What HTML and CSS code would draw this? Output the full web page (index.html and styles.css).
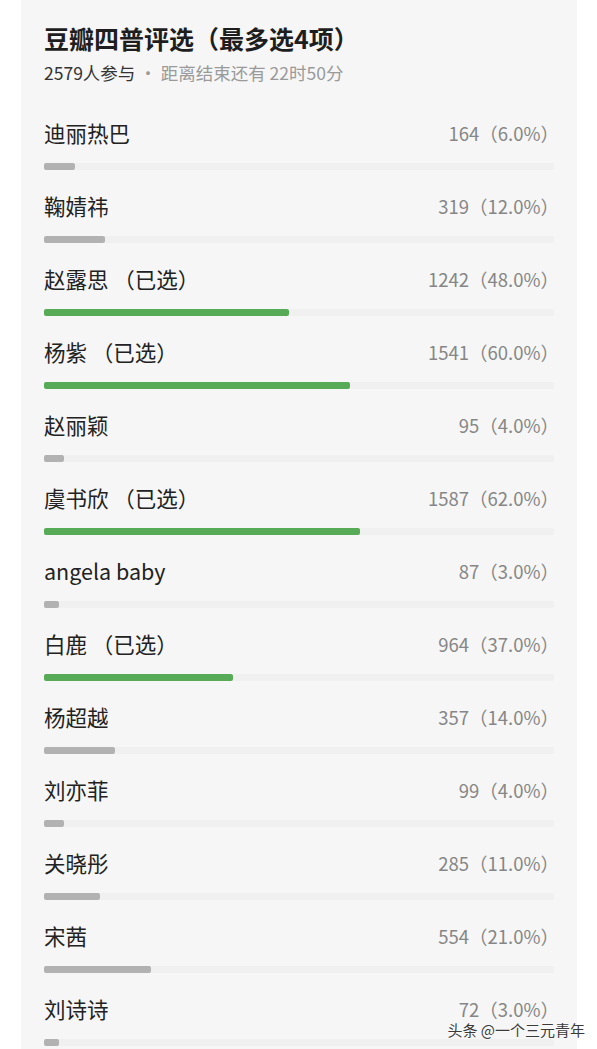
FILE: index.html
```html
<!DOCTYPE html>
<html lang="zh-CN">
<head>
  <meta charset="UTF-8">
  <meta name="viewport" content="width=device-width, initial-scale=1.0">
  <title>豆瓣四普评选</title>
  <link rel="stylesheet" href="styles.css">
</head>
<body>

  <div class="poll-card">
    <h2 class="poll-title">豆瓣四普评选（最多选4项）</h2>
    <p class="poll-meta"><span class="count">2579人参与</span> · 距离结束还有 22时50分</p>

    <ul class="poll-list">
      <li class="poll-item">
        <div class="item-head"><span class="name">迪丽热巴</span><span class="value">164（6.0%）</span></div>
        <div class="track"><div class="fill" style="width: 6%"></div></div>
      </li>
      <li class="poll-item">
        <div class="item-head"><span class="name">鞠婧祎</span><span class="value">319（12.0%）</span></div>
        <div class="track"><div class="fill" style="width: 12%"></div></div>
      </li>
      <li class="poll-item selected">
        <div class="item-head"><span class="name">赵露思 （已选）</span><span class="value">1242（48.0%）</span></div>
        <div class="track"><div class="fill" style="width: 48%"></div></div>
      </li>
      <li class="poll-item selected">
        <div class="item-head"><span class="name">杨紫 （已选）</span><span class="value">1541（60.0%）</span></div>
        <div class="track"><div class="fill" style="width: 60%"></div></div>
      </li>
      <li class="poll-item">
        <div class="item-head"><span class="name">赵丽颖</span><span class="value">95（4.0%）</span></div>
        <div class="track"><div class="fill" style="width: 4%"></div></div>
      </li>
      <li class="poll-item selected">
        <div class="item-head"><span class="name">虞书欣 （已选）</span><span class="value">1587（62.0%）</span></div>
        <div class="track"><div class="fill" style="width: 62%"></div></div>
      </li>
      <li class="poll-item">
        <div class="item-head"><span class="name">angela baby</span><span class="value">87（3.0%）</span></div>
        <div class="track"><div class="fill" style="width: 3%"></div></div>
      </li>
      <li class="poll-item selected">
        <div class="item-head"><span class="name">白鹿 （已选）</span><span class="value">964（37.0%）</span></div>
        <div class="track"><div class="fill" style="width: 37%"></div></div>
      </li>
      <li class="poll-item">
        <div class="item-head"><span class="name">杨超越</span><span class="value">357（14.0%）</span></div>
        <div class="track"><div class="fill" style="width: 14%"></div></div>
      </li>
      <li class="poll-item">
        <div class="item-head"><span class="name">刘亦菲</span><span class="value">99（4.0%）</span></div>
        <div class="track"><div class="fill" style="width: 4%"></div></div>
      </li>
      <li class="poll-item">
        <div class="item-head"><span class="name">关晓彤</span><span class="value">285（11.0%）</span></div>
        <div class="track"><div class="fill" style="width: 11%"></div></div>
      </li>
      <li class="poll-item">
        <div class="item-head"><span class="name">宋茜</span><span class="value">554（21.0%）</span></div>
        <div class="track"><div class="fill" style="width: 21%"></div></div>
      </li>
      <li class="poll-item">
        <div class="item-head"><span class="name">刘诗诗</span><span class="value">72（3.0%）</span></div>
        <div class="track"><div class="fill" style="width: 3%"></div></div>
      </li>
    </ul>
  </div>

  <div class="watermark">头条 @一个三元青年</div>

</body>
</html>
```

FILE: styles.css
```css
body { /* White page behind the card */
  margin: 0;
  padding: 0;
  background: #ffffff;
  font-family: "Noto Sans CJK SC", "Noto Sans", sans-serif;
  color: #222;
  height: 1049px;
  overflow: hidden;
  position: relative;
}

.poll-card { /* Grey poll panel */
  margin: 0 20px 0 21px;
  padding: 22px 22px 0 23px;
  background: #f6f6f6;
  min-height: 1049px;
  box-sizing: border-box;
}

.poll-title {
  margin: 0;
  font-size: 25px;
  line-height: 32px;
  font-weight: 600;
  color: #1e1e1e;
}

.poll-meta {
  margin: 7px 0 0;
  font-size: 17.5px;
  line-height: 24px;
  color: #9a9a9a;
}

.poll-meta .count {
  color: #333;
}

.poll-list {
  list-style: none;
  margin: 34px 0 0;
  padding: 0;
}

.poll-item {
  margin-bottom: 22px;
}

.item-head { /* Name on the left, votes on the right */
  display: flex;
  justify-content: space-between;
  align-items: center;
  height: 28px;
}

.name {
  font-size: 21.5px;
  line-height: 28px;
  color: #222;
}

.value {
  font-size: 18.5px;
  line-height: 18px;
  color: #868686;
  margin-right: -4px;
}

.track { /* Faint full-width bar */
  margin-top: 16px;
  height: 7px;
  width: 510px;
  background: #f0f0f0;
  border-radius: 2px;
}

.fill {
  height: 100%;
  background: #b2b2b2;
  border-radius: 2px;
}

.selected .fill {
  background: #57ab57;
}

/* Site watermark over the bottom corner */
.watermark {
  position: absolute;
  right: 12px;
  bottom: 11px;
  font-size: 15px;
  line-height: 16px;
  color: #3a3a3a;
  text-shadow: 0 0 2px #fff, 0 0 2px #fff;
}
```
